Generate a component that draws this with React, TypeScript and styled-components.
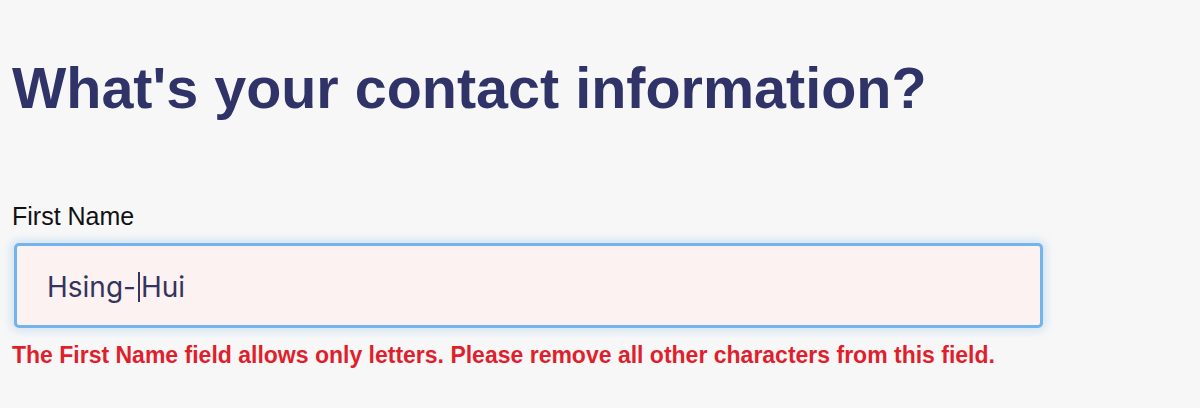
import styled, { createGlobalStyle } from "styled-components";

const GlobalStyle = createGlobalStyle`
  html, body {
    margin: 0;
    padding: 0;
    background: #f7f7f7;
  }
  body {
    font-family: "Liberation Sans", Arial, sans-serif;
  }
`

const Page = styled.div`
  padding: 0 0 0 12px;
  height: 408px;
  box-sizing: border-box;
`

const Title = styled.h1`
  margin: 0;
  padding-top: 58px;
  font-size: 57.5px;
  line-height: 60px;
  font-weight: bold;
  color: #2f3367;
`

const Field = styled.div`
  margin-top: 83px;
  display: flex;
  flex-direction: column;
  width: 1031px;
`

const Label = styled.label`
  font-size: 25px;
  line-height: 30px;
  color: #111;
`

const InputBox = styled.div<{ $invalid?: boolean }>`
  margin: 12px 0 0 2px;
  height: 85px;
  box-sizing: border-box;
  border: 3px solid #74b4ea;
  border-radius: 5px;
  background: ${p => (p.$invalid ? "#fcf2f2" : "#fff")};
  box-shadow: 0 0 8px 3px rgba(140, 190, 235, 0.35);
  display: flex;
  align-items: center;
  padding: 3px 0 0 30px;
  font-family: Inter, "Liberation Sans", sans-serif;
  font-size: 28px;
  color: #34345f;
`

const Caret = styled.span`
  display: inline-block;
  width: 2px;
  height: 30px;
  background: #34345f;
  margin: 0 1px 0 2px;
`

const ErrorText = styled.div`
  margin-top: 13px;
  font-size: 23px;
  line-height: 28px;
  font-weight: bold;
  color: #e01f2d;
`

export default function App() {
  return (
    <>
      <GlobalStyle />
      <Page>
        <Title>What's your contact information?</Title>
        <Field>
          <Label>First Name</Label>
          <InputBox $invalid>
            <span>Hsing-</span>
            <Caret />
            <span>Hui</span>
          </InputBox>
          <ErrorText>
            The First Name field allows only letters. Please remove all other characters from this field.
          </ErrorText>
        </Field>
      </Page>
    </>
  )
}
